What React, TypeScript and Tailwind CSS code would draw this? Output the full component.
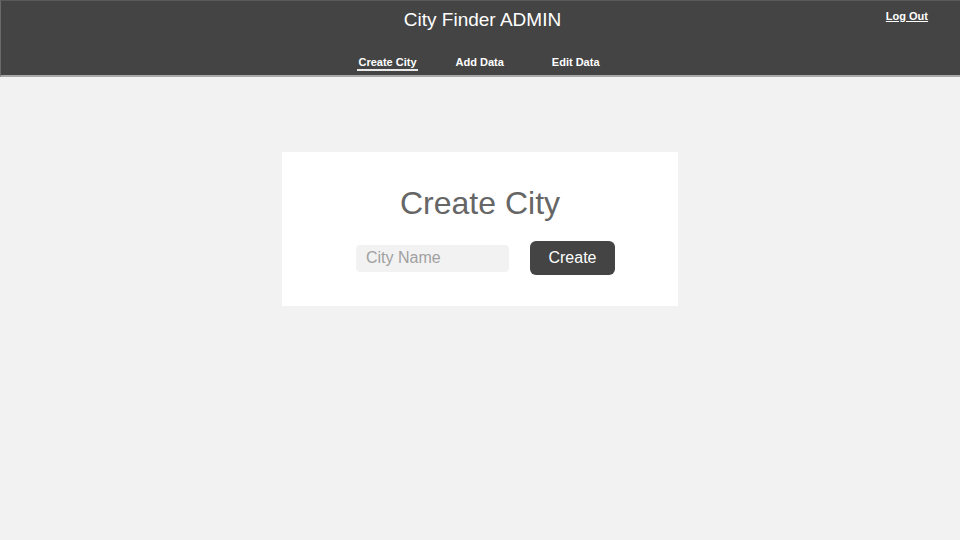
export default function App() {
  return (
    <div className="min-h-[540px] w-full bg-[#f2f2f2] font-['Liberation_Sans',Arial,sans-serif]">
      {/* Header */}
      <header className="h-[77px] border-t border-l border-t-[#5a5a5a] border-l-[#6a6a6a] border-b-2 border-b-[#a8a8a8] bg-[#444444]">
        <div className="grid grid-cols-[1fr_auto_1fr] pt-[8px]">
          <div />
          <h1 className="pl-[4px] text-[19px] leading-[22px] text-white">City Finder ADMIN</h1>
          <div className="flex justify-end pr-[32px]">
            <a href="#" className="text-[11px] leading-[14px] font-bold text-white underline underline-offset-1">
              Log Out
            </a>
          </div>
        </div>
        <nav className="mt-[24px] flex justify-center pr-[4px] text-[11px] leading-[14px] font-bold text-white">
          <a href="#" className="border-b-2 border-[#e8e8e8] px-[1px]">Create City</a>
          <a href="#" className="ml-[38px]">Add Data</a>
          <a href="#" className="ml-[48px]">Edit Data</a>
        </nav>
      </header>

      {/* Card */}
      <main className="pt-[75px]">
        <div className="mx-auto h-[154px] w-[396px] bg-white pt-[33px]">
          <h2 className="text-center text-[32px] leading-[36px] text-[#666666]">Create City</h2>
          <div className="mt-[20px] flex items-center pl-[74px]">
            <input
              type="text"
              placeholder="City Name"
              className="h-[27px] w-[153px] rounded-[4px] bg-[#f2f2f2] pl-[10px] text-[16px] text-[#555] placeholder:text-[#a0a0a0] outline-none"
            />
            <button className="ml-[21px] h-[34px] w-[85px] rounded-[6px] bg-[#444444] text-[16px] text-white">
              Create
            </button>
          </div>
        </div>
      </main>
    </div>
  );
}
